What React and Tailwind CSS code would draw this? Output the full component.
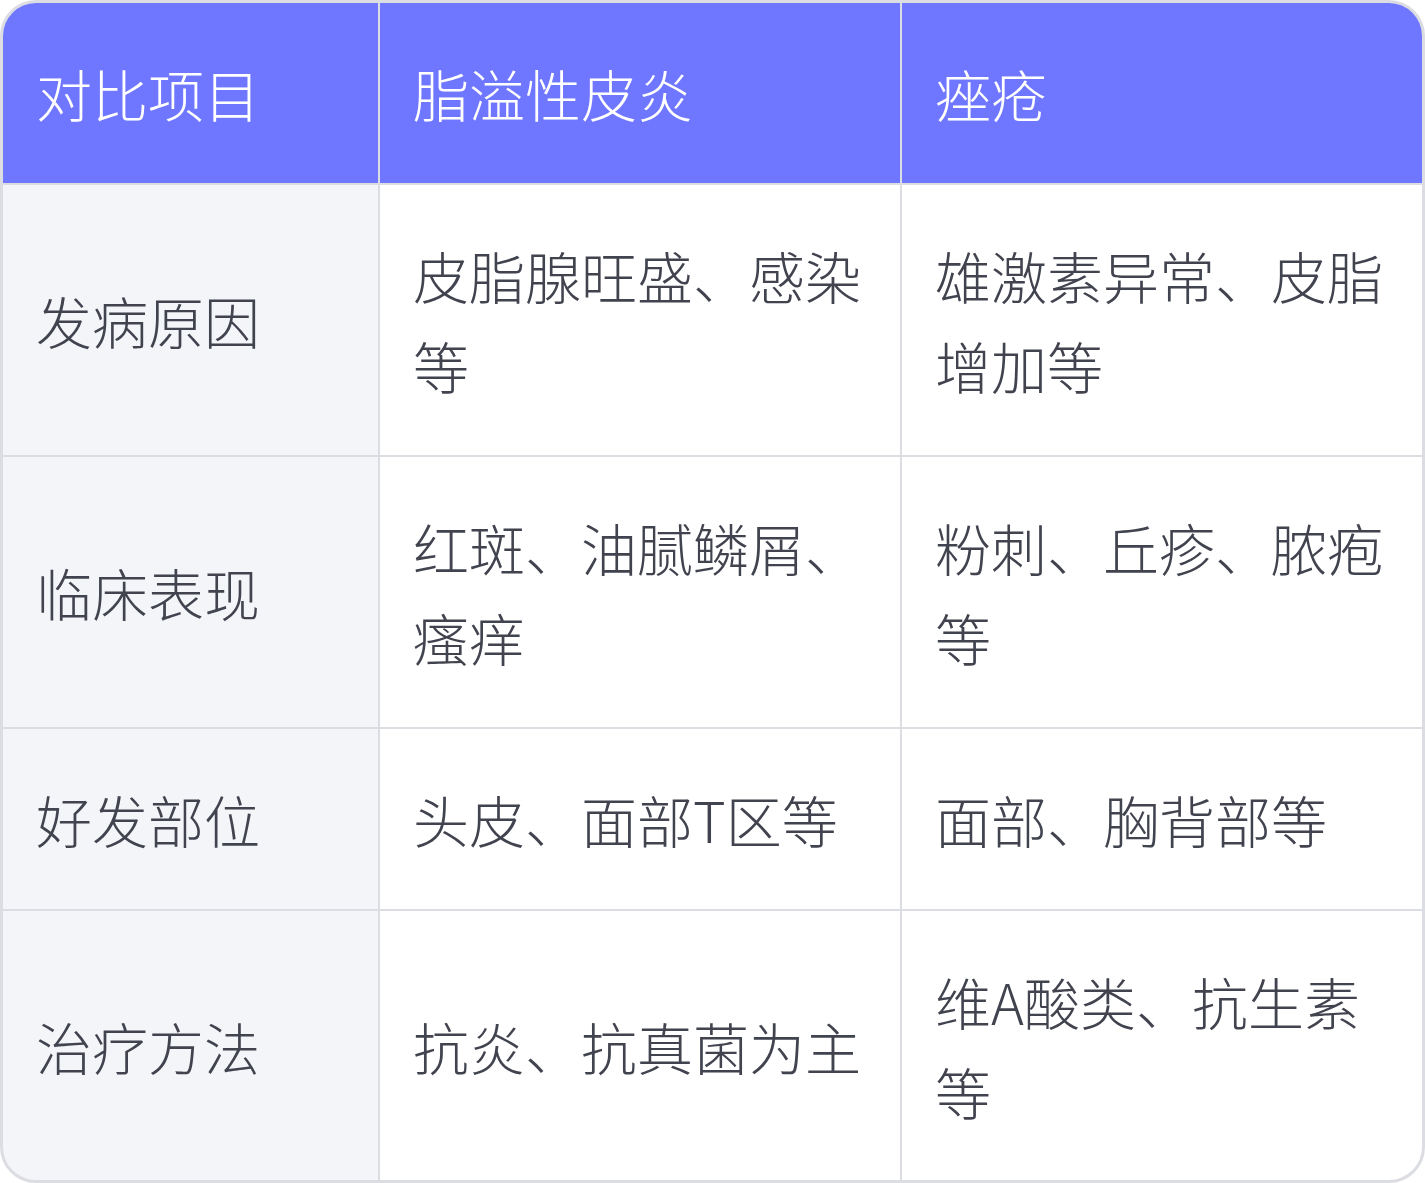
export default function App() {
  const rows = [
    ["发病原因", "皮脂腺旺盛、感染等", "雄激素异常、皮脂增加等", "h-[270px]"],
    ["临床表现", "红斑、油腻鳞屑、瘙痒", "粉刺、丘疹、脓疱等", "h-[270px]"],
    ["好发部位", "头皮、面部T区等", "面部、胸背部等", "h-[180px]"],
    ["治疗方法", "抗炎、抗真菌为主", "维A酸类、抗生素等", "h-[269px]"],
  ];
  const font = { fontFamily: '"Noto Sans CJK SC", "Noto Sans", sans-serif' };
  return (
    <div className="w-[1425px] h-[1183px] bg-white" style={font}>
      <div className="grid grid-cols-[375px_520px_520px] gap-[2px] bg-[#dcdde3] border-[3px] border-[#dcdde3] rounded-[36px] overflow-hidden text-[56px] leading-[90px] font-light">
        <div className="h-[180px] bg-[#6f76ff] text-white pl-[33px] pr-[35px] flex items-center">对比项目</div>
        <div className="h-[180px] bg-[#6f76ff] text-white pl-[33px] pr-[35px] flex items-center">脂溢性皮炎</div>
        <div className="h-[180px] bg-[#6f76ff] text-white pl-[33px] pr-[35px] flex items-center">痤疮</div>
        {rows.map(([a, b, c, h]) => (
          <>
            <div key={a + "a"} className={`${h} bg-[#f4f5f9] text-[#41434f] pl-[33px] pr-[35px] flex items-center`}>{a}</div>
            <div key={a + "b"} className={`${h} bg-white text-[#41434f] pl-[33px] pr-[35px] flex items-center`}>{b}</div>
            <div key={a + "c"} className={`${h} bg-white text-[#41434f] pl-[33px] pr-[35px] flex items-center`}>{c}</div>
          </>
        ))}
      </div>
    </div>
  );
}
